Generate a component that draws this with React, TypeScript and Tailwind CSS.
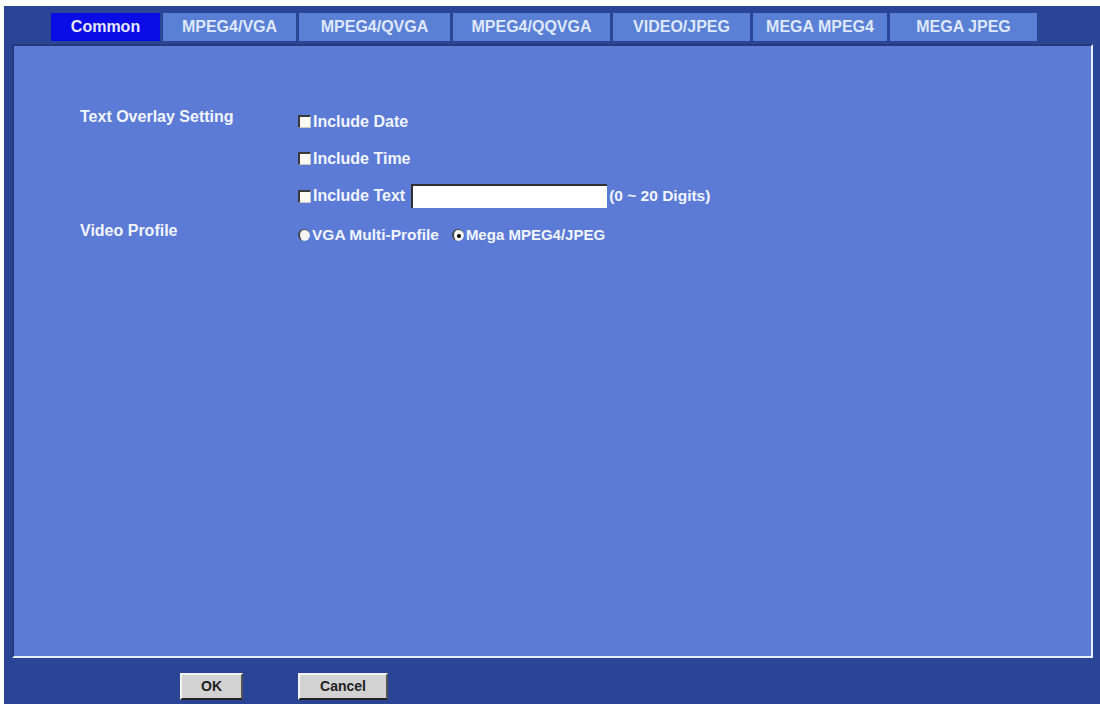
import React from 'react';

const tabs = [
  { label: 'Common', w: 'w-[109px]', active: true },
  { label: 'MPEG4/VGA', w: 'w-[133px]' },
  { label: 'MPEG4/QVGA', w: 'w-[151px]' },
  { label: 'MPEG4/QQVGA', w: 'w-[157px]' },
  { label: 'VIDEO/JPEG', w: 'w-[137px]' },
  { label: 'MEGA MPEG4', w: 'w-[134px]' },
  { label: 'MEGA JPEG', w: 'w-[147px]' },
];

function Checkbox() {
  return (
    <span className="w-[13px] h-[13px] shrink-0 bg-[#fbfbf4] border-t-2 border-l-2 border-[#3a3a3a] border-r border-b border-r-[#c8c8c8] border-b-[#c8c8c8]" />
  );
}

function Radio({ checked }: { checked?: boolean }) {
  return (
    <span className="w-[12px] h-[12px] shrink-0 rounded-full bg-[#f4f4f4] border-l-2 border-t border-[#444] flex items-center justify-center">
      {checked && <span className="w-[4px] h-[4px] rounded-full bg-black" />}
    </span>
  );
}

export default function App() {
  return (
    <div className="w-[1100px] h-[704px] bg-white pt-[6px] pl-[4px] overflow-hidden font-['Liberation_Sans',Arial,sans-serif] font-bold">
      <div className="h-full bg-[#2a4595] flex flex-col">
        {/* Tabs */}
        <div className="flex gap-[3px] pl-[47px] pt-[7px] h-[35px]">
          {tabs.map((t) => (
            <div
              key={t.label}
              className={`${t.w} h-[28px] flex items-center justify-center text-[16px] ${
                t.active ? 'bg-[#0a0ce6] text-[#e6e8ff]' : 'bg-[#5a80d6] text-[#dfe8fb]'
              }`}
            >
              {t.label}
            </div>
          ))}
        </div>

        {/* Panel */}
        <div className="ml-[8px] mt-[3px] w-[1081px] h-[614px] bg-[#5b7bd6] border-t-2 border-l-2 border-[#27397a] border-r-2 border-b-2 border-r-[#e6eeff] border-b-[#e6eeff] pt-[57px] pl-[66px] text-[#f2f5ff] text-[16px]">
          <div className="flex h-[37px] items-center">
            <div className="w-[218px] pb-[10px]">Text Overlay Setting</div>
            <div className="flex items-center gap-[2px]">
              <Checkbox />
              <span>Include Date</span>
            </div>
          </div>
          <div className="flex h-[37px] items-center">
            <div className="w-[218px]" />
            <div className="flex items-center gap-[2px]">
              <Checkbox />
              <span>Include Time</span>
            </div>
          </div>
          <div className="flex h-[38px] items-center">
            <div className="w-[218px]" />
            <div className="flex items-center gap-[2px]">
              <Checkbox />
              <span>Include Text</span>
              <span className="ml-[4px] w-[196px] h-[24px] bg-white border-t-2 border-l-2 border-[#303030]" />
              <span className="text-[15.5px]">(0 ~ 20 Digits)</span>
            </div>
          </div>
          <div className="flex h-[40px] items-center">
            <div className="w-[218px] pb-[8px]">Video Profile</div>
            <div className="flex items-center gap-[2px] text-[15.5px]">
              <Radio />
              <span>VGA Multi-Profile</span>
              <span className="ml-[11px]"><Radio checked /></span>
              <span className="text-[15px]">Mega MPEG4/JPEG</span>
            </div>
          </div>
        </div>

        {/* Buttons */}
        <div className="flex gap-[55px] pl-[176px] mt-[15px]">
          <button className="w-[63px] h-[27px] bg-[#d2d2d2] text-[#222] text-[14px] border-t-2 border-l-2 border-[#f4f4f4] border-r-2 border-b-2 border-r-[#555] border-b-[#222]">
            OK
          </button>
          <button className="w-[90px] h-[27px] bg-[#d2d2d2] text-[#222] text-[14px] border-t-2 border-l-2 border-[#f4f4f4] border-r-2 border-b-2 border-r-[#555] border-b-[#222]">
            Cancel
          </button>
        </div>
      </div>
    </div>
  );
}
